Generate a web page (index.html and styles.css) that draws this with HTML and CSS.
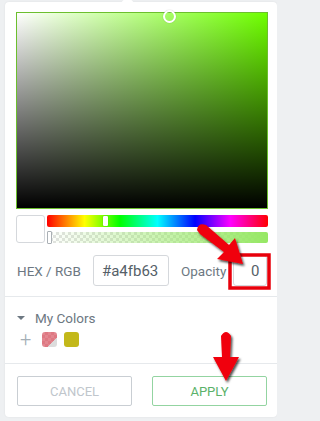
FILE: index.html
```html
<!DOCTYPE html>
<html>
<head>
<meta charset="utf-8">
<link rel="stylesheet" href="styles.css">
</head>
<body>
<div class="panel">
  <span class="notch"></span>
  <div class="saturation">
    <span class="sat-handle"></span>
  </div>
  <div class="sliders">
    <div class="preview"></div>
    <div class="bars">
      <div class="hue"><span class="hue-handle"></span></div>
      <div class="alpha"><span class="alpha-handle"></span></div>
    </div>
  </div>
  <div class="inputs">
    <span class="label">HEX / RGB</span>
    <div class="field hex">#a4fb63</div>
    <span class="label opacity-label">Opacity</span>
    <div class="field opacity">0</div>
  </div>
  <div class="sep"></div>
  <div class="mycolors">
    <div class="mc-head"><span class="caret"></span>My Colors</div>
    <div class="mc-list">
      <span class="plus">+</span>
      <span class="swatch swatch-a"></span>
      <span class="swatch swatch-b"></span>
    </div>
  </div>
  <div class="sep"></div>
  <div class="actions">
    <button class="btn cancel">CANCEL</button>
    <button class="btn apply">APPLY</button>
  </div>
</div>
<svg class="annot" width="277" height="421" viewBox="0 0 277 421">
  <defs>
    <filter id="sh" x="-30%" y="-30%" width="160%" height="160%">
      <feDropShadow dx="1.5" dy="2" stdDeviation="1.2" flood-color="#000" flood-opacity="0.7"/>
    </filter>
  </defs>
  <rect x="230" y="255" width="39" height="33" fill="none" stroke="#e8000b" stroke-width="3.5"/>
  <g filter="url(#sh)" fill="#f0000a">
    <path d="M197 230 Q198 222 206 225 L229 245 L235 238 L243 264 L217 259 L224 252 L200 234 Z"/>
    <path d="M221 336 Q226 328 231 336 L230 357 L239 357 L226 381 L213 357 L222 357 Z"/>
  </g>
</svg>
</body>
</html>
```

FILE: styles.css
```css
* { box-sizing: border-box; }
html, body { margin: 0; padding: 0; }
body {
  width: 277px;
  height: 421px;
  overflow: hidden;
  background: #eef0f2;
  font-family: Roboto, "Liberation Sans", sans-serif;
  position: relative;
}
.panel {
  position: relative;
  margin: 2px 2px 0 5px;
  width: 272px;
  height: 415px;
  background: #fff;
  border-radius: 4px;
  box-shadow: 0 0 2px rgba(0,0,0,0.08);
  padding: 10px 0 0 0;
}
.notch {
  position: absolute;
  left: 118px;
  top: -4px;
  width: 9px;
  height: 9px;
  background: #fff;
  transform: rotate(45deg);
}
.saturation {
  position: relative;
  margin-left: 11px;
  width: 252px;
  height: 197px;
  border: 1px solid #6cbf2e;
  background:
    linear-gradient(to top, #000, rgba(0,0,0,0)),
    linear-gradient(to right, #fff, hsl(94, 100%, 50%));
}
.sat-handle {
  position: absolute;
  left: 146px;
  top: -3px;
  width: 13px;
  height: 13px;
  border: 2px solid #fff;
  border-radius: 50%;
  box-shadow: 0 0 1px rgba(0,0,0,0.4);
}
.sliders {
  display: flex;
  gap: 2px;
  margin: 6px 0 0 11px;
  width: 252px;
}
.preview {
  width: 29px;
  height: 28px;
  border: 1px solid #d5d8dc;
  border-radius: 3px;
  background: #fff;
}
.bars {
  flex: 1;
  display: flex;
  flex-direction: column;
  gap: 5px;
}
.hue {
  position: relative;
  height: 12px;
  border-radius: 2px;
  background: linear-gradient(to right, #f00 0%, #ff0 17%, #0f0 33%, #0ff 50%, #00f 67%, #f0f 83%, #f00 100%);
}
.hue-handle {
  position: absolute;
  left: 56px;
  top: 1px;
  width: 5px;
  height: 10px;
  background: #fff;
  border-radius: 1px;
  box-shadow: 0 0 1px rgba(0,0,0,0.5);
}
.alpha {
  position: relative;
  height: 11px;
  border-radius: 2px;
  background:
    linear-gradient(to right, rgba(164,251,99,0), rgba(150,232,100,1)),
    repeating-conic-gradient(#e2e2e2 0% 25%, #fff 0% 50%) 0 0 / 6px 6px;
}
.alpha-handle {
  position: absolute;
  left: 0;
  top: -1px;
  width: 5px;
  height: 13px;
  background: #fff;
  border: 1px solid #aab0b5;
  border-radius: 1px;
}
.inputs {
  display: flex;
  align-items: center;
  margin: 12px 0 0 12px;
  height: 31px;
}
.label {
  font-size: 13.5px;
  color: #6d7882;
}
.field {
  height: 31px;
  border: 1px solid #d5d8dc;
  border-radius: 3px;
  font-size: 15px;
  color: #556068;
  display: flex;
  align-items: center;
}
.hex {
  margin-left: 12px;
  width: 76px;
  padding-left: 8px;
}
.opacity-label { margin-left: 12px; }
.opacity {
  margin-left: 7px;
  width: 34px;
  justify-content: flex-end;
  padding-right: 7px;
}
.sep {
  height: 1px;
  background: #e6e9ec;
  margin-top: 10px;
}
.mycolors {
  padding: 12px 0 0 12px;
  height: 56px;
}
.mycolors + .sep { margin-top: 10px; }
.mc-head {
  display: flex;
  align-items: center;
  font-size: 13.5px;
  color: #6d7882;
  height: 17px;
}
.caret {
  width: 0;
  height: 0;
  border-left: 4px solid transparent;
  border-right: 4px solid transparent;
  border-top: 4px solid #6d7882;
  margin-right: 10px;
}
.mc-list {
  display: flex;
  align-items: center;
  gap: 7px;
  margin-top: 6px;
  margin-left: 3px;
}
.plus {
  font-size: 20px;
  line-height: 15px;
  color: #a4afb7;
  font-weight: 300;
  width: 13px;
}
.swatch {
  width: 15px;
  height: 15px;
  border-radius: 3px;
}
.swatch-a {
  margin-left: 2px;
  background:
    linear-gradient(135deg, rgba(224,120,130,0.75) 0 70%, rgba(220,220,220,1) 70%),
    repeating-conic-gradient(#d87b85 0% 25%, #eab4ba 0% 50%) 0 0 / 6px 6px;
}
.swatch-b { background: #c3b81a; }
.actions {
  display: flex;
  gap: 20px;
  padding: 12px 0 0 12px;
}
.btn {
  width: 115px;
  height: 30px;
  background: #fff;
  border-radius: 2px;
  font-family: Roboto, "Liberation Sans", sans-serif;
  font-size: 13px;
  padding: 0;
}
.cancel {
  border: 1px solid #c9ced3;
  color: #c0c6cc;
}
.apply {
  border: 1px solid #93d4a1;
  color: #5bb26a;
}
.annot {
  position: absolute;
  left: 0;
  top: 0;
  pointer-events: none;
}
```
